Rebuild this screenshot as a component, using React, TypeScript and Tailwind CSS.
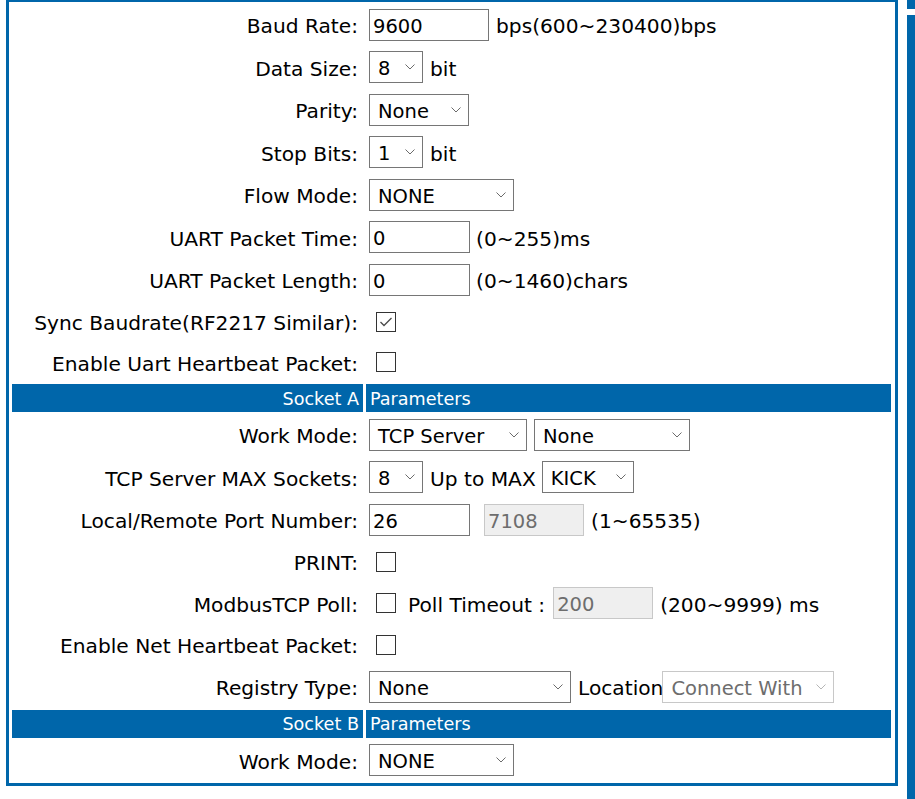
import React from 'react';

const BLUE = 'bg-[#0066aa]';

function Chevron({ disabled }: { disabled?: boolean }) {
  return (
    <svg width="10" height="6" viewBox="0 0 10 6" className="shrink-0">
      <polyline
        points="0.5,0.5 5,5 9.5,0.5"
        fill="none"
        stroke={disabled ? '#b5b5b5' : '#6b6b6b'}
        strokeWidth="1"
      />
    </svg>
  );
}

function Select({ value, w, disabled, className = '' }: { value: string; w: string; disabled?: boolean; className?: string }) {
  return (
    <div
      className={`${w} ${className} h-[32px] shrink-0 flex items-center justify-between pl-[8px] pr-[7px] border bg-white text-[19.5px] ${
        disabled ? 'border-[#c8c8c8] text-[#6d6d6d]' : 'border-[#767676] text-black'
      }`}
    >
      <span className="leading-none whitespace-nowrap pt-[3px]">{value}</span>
      <Chevron disabled={disabled} />
    </div>
  );
}

function Input({ value, w, disabled, className = '' }: { value: string; w: string; disabled?: boolean; className?: string }) {
  return (
    <div
      className={`${w} ${className} h-[32px] shrink-0 flex items-center pl-[3px] border text-[19.5px] ${
        disabled ? 'border-[#c8c8c8] bg-[#efefef] text-[#6d6d6d]' : 'border-[#767676] bg-white text-black'
      }`}
    >
      <span className="leading-none pt-[3px]">{value}</span>
    </div>
  );
}

function Check({ checked, className = '' }: { checked?: boolean; className?: string }) {
  return (
    <div className={`${className} w-[20px] h-[20px] shrink-0 border border-[#333333] bg-white flex items-center justify-center`}>
      {checked && (
        <svg width="14" height="12" viewBox="0 0 14 12">
          <polyline points="1.5,6 5,9.5 12.5,2" fill="none" stroke="#4a4a4a" strokeWidth="1.3" />
        </svg>
      )}
    </div>
  );
}

function Txt({ children, className = '' }: { children: React.ReactNode; className?: string }) {
  return <span className={`${className} pt-[3px]`}>{children}</span>;
}

function Row({ label, h, children }: { label: string; h: string; children?: React.ReactNode }) {
  return (
    <div className={`flex gap-[3px] ${h}`}>
      <div className="w-[351px] shrink-0 flex items-center justify-end pr-[5px] pt-[3px] whitespace-nowrap">{label}</div>
      <div className="flex-1 flex items-center pl-[3px] whitespace-nowrap">{children}</div>
    </div>
  );
}

function Header({ name }: { name: string }) {
  return (
    <div className="flex gap-[3px] h-[28px] text-white text-[17.6px]">
      <div className={`w-[351px] shrink-0 flex items-center justify-end pr-[4px] pt-[2px] ${BLUE}`}>{name}</div>
      <div className={`flex-1 flex items-center pl-[4px] pt-[2px] ${BLUE}`}>Parameters</div>
    </div>
  );
}

export default function App() {
  return (
    <div className="w-[915px] h-[799px] overflow-hidden bg-white flex font-['DejaVu_Sans',Verdana,sans-serif] text-[20.2px] text-black">
      <div className="ml-[6px] w-[892px] h-[786px] shrink-0 border-[3px] border-t-2 border-[#0066aa] flex flex-col gap-[3px] pt-[3px] pl-[3px] pr-[4px]">
        <Row label="Baud Rate:" h="h-[39.5px]">
          <Input value="9600" w="w-[120px]" />
          <Txt className="ml-[7px]">bps(600~230400)bps</Txt>
        </Row>
        <Row label="Data Size:" h="h-[39.5px]">
          <Select value="8" w="w-[54px]" />
          <Txt className="ml-[7px]">bit</Txt>
        </Row>
        <Row label="Parity:" h="h-[39.5px]">
          <Select value="None" w="w-[100px]" />
        </Row>
        <Row label="Stop Bits:" h="h-[39.5px]">
          <Select value="1" w="w-[54px]" />
          <Txt className="ml-[7px]">bit</Txt>
        </Row>
        <Row label="Flow Mode:" h="h-[39.5px]">
          <Select value="NONE" w="w-[145px]" />
        </Row>
        <Row label="UART Packet Time:" h="h-[39.5px]">
          <Input value="0" w="w-[101px]" />
          <Txt className="ml-[6px]">(0~255)ms</Txt>
        </Row>
        <Row label="UART Packet Length:" h="h-[39.5px]">
          <Input value="0" w="w-[101px]" />
          <Txt className="ml-[6px]">(0~1460)chars</Txt>
        </Row>
        <Row label="Sync Baudrate(RF2217 Similar):" h="h-[38px]">
          <Check checked className="ml-[7px]" />
        </Row>
        <Row label="Enable Uart Heartbeat Packet:" h="h-[37.5px]">
          <Check className="ml-[7px]" />
        </Row>
        <Header name="Socket A" />
        <Row label="Work Mode:" h="h-[39.5px]">
          <Select value="TCP Server" w="w-[158px]" />
          <Select value="None" w="w-[156px]" className="ml-[7px]" />
        </Row>
        <Row label="TCP Server MAX Sockets:" h="h-[39.5px]">
          <Select value="8" w="w-[54px]" />
          <Txt className="ml-[7px]">Up to MAX</Txt>
          <Select value="KICK" w="w-[92px]" className="ml-[6px]" />
        </Row>
        <Row label="Local/Remote Port Number:" h="h-[39.5px]">
          <Input value="26" w="w-[101px]" />
          <Input value="7108" w="w-[100px]" disabled className="ml-[14px]" />
          <Txt className="ml-[7px]">(1~65535)</Txt>
        </Row>
        <Row label="PRINT:" h="h-[38px]">
          <Check className="ml-[7px]" />
        </Row>
        <Row label="ModbusTCP Poll:" h="h-[39.5px]">
          <Check className="ml-[7px]" />
          <Txt className="ml-[12px]">Poll Timeout :</Txt>
          <Input value="200" w="w-[100px]" disabled className="ml-[8px]" />
          <Txt className="ml-[7px]">(200~9999) ms</Txt>
        </Row>
        <Row label="Enable Net Heartbeat Packet:" h="h-[38px]">
          <Check className="ml-[7px]" />
        </Row>
        <Row label="Registry Type:" h="h-[39.5px]">
          <Select value="None" w="w-[202px]" />
          <Txt className="ml-[7px]">Location</Txt>
          <Select value="Connect With" w="w-[172px]" disabled className="-ml-[1px]" />
        </Row>
        <Header name="Socket B" />
        <Row label="Work Mode:" h="h-[39.5px]">
          <Select value="NONE" w="w-[145px]" />
        </Row>
      </div>
      <div className="ml-[9px] w-[8px] shrink-0 flex flex-col gap-[6px]">
        <div className="h-[9px] bg-[#0066aa]" />
        <div className="flex-1 bg-[#0066aa]" />
      </div>
    </div>
  );
}
